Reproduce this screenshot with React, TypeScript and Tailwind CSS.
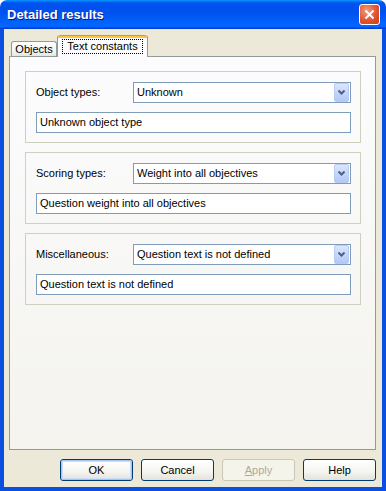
import { ReactNode } from "react"

const groups = [
  { label: "Object types:", value: "Unknown", text: "Unknown object type" },
  { label: "Scoring types:", value: "Weight into all objectives", text: "Question weight into all objectives" },
  { label: "Miscellaneous:", value: "Question text is not defined", text: "Question text is not defined" }
]

function ComboBox({ value }: { value: string }) {
  return (
    <div className="flex h-[21px] w-[218px] items-center border border-[#7F9DB9] bg-white pl-[3px] pr-px">
      <span className="flex-1 truncate">{value}</span>
      <div className="flex h-[19px] w-[15px] items-center justify-center rounded-[2px] border border-[#B9CBF3] bg-[linear-gradient(180deg,#DCE6FD_0%,#C1D3FB_60%,#B4C8F6_100%)]">
        <svg width="7" height="5" viewBox="0 0 7 5">
          <path d="M0.5 0.5 L3.5 3.5 L6.5 0.5" stroke="#4D6185" strokeWidth="2" fill="none" />
        </svg>
      </div>
    </div>
  )
}

function Button({ children, primary, disabled }: { children: ReactNode; primary?: boolean; disabled?: boolean }) {
  if (disabled) {
    return (
      <div className="flex h-[22px] w-[73px] items-center justify-center rounded-[3px] border border-[#C9C7BA] bg-[#F5F4EA] text-[#ACA899]">
        {children}
      </div>
    )
  }
  return (
    <div className="flex h-[22px] w-[73px] items-center justify-center rounded-[3px] border border-[#003C74] bg-[linear-gradient(180deg,#FFFFFF_0%,#F4F4F0_60%,#E3E2DA_100%)]">
      <div
        className={
          primary
            ? "flex h-full w-full items-center justify-center rounded-[2px] border border-[#A8C4EE] shadow-[inset_0_0_0_1px_#CEDDF7]"
            : "flex h-full w-full items-center justify-center"
        }>
        {children}
      </div>
    </div>
  )
}

export default function App() {
  return (
    <div className="flex h-[491px] w-[386px] flex-col font-['Liberation_Sans',Arial,sans-serif] text-[11px] text-black">
      {/* title bar */}
      <div className="flex h-[29px] shrink-0 items-center rounded-t-[7px] bg-[linear-gradient(180deg,#0997FF_0%,#0053EE_10%,#0050EE_40%,#0066FF_86%,#0066FF_92%,#005BFF_94%,#003DD7_96%,#003DD7_100%)] pl-[7px] pr-[6px]">
        <span className="flex-1 text-[13px] font-bold text-white [text-shadow:1px_1px_#0A1A80]">Detailed results</span>
        <div className="flex h-[21px] w-[21px] items-center justify-center rounded-[3px] border border-white bg-[radial-gradient(circle_at_35%_30%,#F39B7D_0%,#E2532F_55%,#C7401C_100%)]">
          <svg width="11" height="11" viewBox="0 0 11 11">
            <path d="M1.5 1.5 L9.5 9.5 M9.5 1.5 L1.5 9.5" stroke="white" strokeWidth="2" />
          </svg>
        </div>
      </div>

      {/* body */}
      <div className="flex flex-1 flex-col border-x-4 border-b-4 border-[#0A4FE0] bg-[#ECE9D8] pl-[5px] pr-[6px] pt-[6px]">
        {/* tabs */}
        <div className="relative z-10 flex h-[21px] items-end pl-[2px]">
          <div className="flex h-[15px] w-[46px] items-center justify-center rounded-t-[3px] border border-b-0 border-[#919B9C] bg-[linear-gradient(180deg,#FFFFFF_0%,#F3F3EF_70%,#E6E5DE_100%)] pt-px">
            Objects
          </div>
          <div className="-mb-px flex h-[22px] w-[91px] flex-col rounded-t-[3px] border-x border-[#919B9C] bg-[#FCFCFE]">
            <div className="h-[3px] rounded-t-[3px] border-t border-[#E68B2C] bg-[#FFC83C]" />
            <div className="flex flex-1 items-start justify-center pt-px">
              <span className="border border-dotted border-black px-[4px] leading-[13px]">Text constants</span>
            </div>
          </div>
        </div>

        {/* panel */}
        <div className="flex h-[394px] flex-col gap-[9px] border border-[#919B9C] bg-[linear-gradient(180deg,#FCFCFE_0%,#F4F3EE_100%)] pl-[15px] pr-[14px] pt-[14px]">
          {groups.map(g => (
            <div key={g.label} className="flex h-[72px] flex-col gap-[9px] border border-[#D0D0BF] pl-[10px] pr-[9px] pt-[10px]">
              <div className="flex items-start justify-between">
                <span className="pt-[2px]">{g.label}</span>
                <ComboBox value={g.value} />
              </div>
              <div className="flex h-[21px] items-center border border-[#7F9DB9] bg-white pl-[3px]">{g.text}</div>
            </div>
          ))}
        </div>

        {/* buttons */}
        <div className="mt-[9px] flex justify-end gap-[8px]">
          <Button primary>OK</Button>
          <Button>Cancel</Button>
          <Button disabled>
            <span>
              <span className="underline">A</span>pply
            </span>
          </Button>
          <Button>Help</Button>
        </div>
      </div>
    </div>
  )
}
